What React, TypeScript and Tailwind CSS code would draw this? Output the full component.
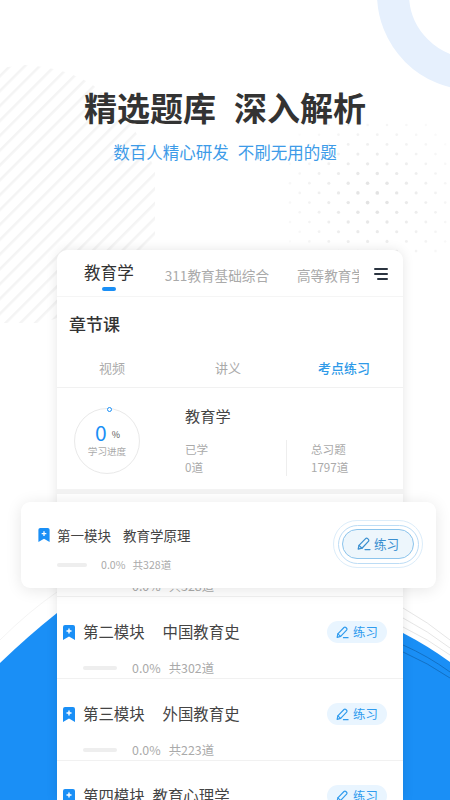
const FONT = "font-['Noto_Sans_CJK_SC','Noto_Sans',sans-serif]";

function Background() {
  const dots: { x: number; y: number; r: number; o: number }[] = [];
  for (let row = 0; row < 14; row++) {
    for (let col = 0; col < 18; col++) {
      const x = 290 + col * 9.7;
      const y = 125 + row * 9.7;
      const d = Math.hypot(x - 372, y - 198) / 100;
      if (d > 1 || (row + col) % 2 === 1) continue;
      dots.push({ x, y, r: 1.9 - d * 0.8, o: 0.6 * (1 - d) + 0.06 });
    }
  }
  return (
    <svg className="absolute inset-0" width="450" height="800" viewBox="0 0 450 800">
      <defs>
        <pattern id="st" width="10.5" height="10.5" patternUnits="userSpaceOnUse" patternTransform="rotate(-45)">
          <rect width="10.5" height="2.5" fill="#f4f4f4" />
        </pattern>
      </defs>
      <circle cx="473" cy="-6" r="80" fill="none" stroke="#e6f0fd" strokeWidth="32" />
      <path d="M0 68 L25 65 Q70 68 97 88 Q135 120 155 170 L155 245 Q100 310 40 323 L0 323Z" fill="url(#st)" />
      {dots.map((d, i) => (
        <circle key={i} cx={d.x} cy={d.y} r={d.r} fill="#d0d0d0" opacity={d.o} />
      ))}
      <path d="M0 663 Q28 636 57 613 L403 633 Q428 646 450 662 L450 800 L0 800Z" fill="#1a8ff6" />
      <path d="M403 608 Q428 622 450 640" fill="none" stroke="#e6e6e6" />
      <path d="M403 618 Q428 631 450 648" fill="none" stroke="#e6e6e6" />
      <path d="M403 627 Q428 639 450 655" fill="none" stroke="#e6e6e6" />
      <path d="M403 645 Q428 656 450 672" fill="none" stroke="#1068b8" strokeWidth="0.8" />
      <path d="M403 652 Q428 663 450 678" fill="none" stroke="#1068b8" strokeWidth="0.8" />
      <path d="M0 640 Q28 612 57 592" fill="none" stroke="#f4f4f4" />
    </svg>
  );
}

function Bookmark({ className }: { className: string }) {
  return (
    <svg className={className} viewBox="0 0 12 15">
      <path d="M2 0H10a2 2 0 0 1 2 2V15L6 11.6 0 15V2a2 2 0 0 1 2-2Z" fill="#1a8ff6" />
      <path d="M6 3.5v5M3.5 6h5" stroke="#fff" strokeWidth="1.4" />
    </svg>
  );
}

function Pen({ className }: { className: string }) {
  return (
    <svg className={className} viewBox="0 0 14 14" fill="none" stroke="currentColor" strokeWidth="1.25" strokeLinejoin="round" strokeLinecap="round">
      <path d="M1.2 12.2 2 8.4 8.6 1.6a1.4 1.4 0 0 1 2 0l.8.8a1.4 1.4 0 0 1 0 2L5 11.2Z" />
      <path d="M2 8.4 5 11.2M8 12.6H13" />
    </svg>
  );
}

function Row({ a, b, gap, n }: { a: string; b: string; gap: string; n: string }) {
  return (
    <div className="flex h-[82px] shrink-0 items-start justify-between border-b border-[#f1f1f1] pl-[6px] pr-[16px]">
      <div>
        <div className="mt-[23px] flex h-[24px] items-center">
          <Bookmark className="h-[15px] w-[12px]" />
          <span className={`ml-[8px] text-[15.4px] text-[#444] ${gap}`}>{a}</span>
          <span className="text-[15.4px] text-[#444]">{b}</span>
        </div>
        <div className="mt-[15px] flex h-[18px] items-center pl-[20px] text-[12.4px] text-[#aaa]">
          <span className="h-[4.5px] w-[34px] rounded-full bg-[#eeeeee]" />
          <span className="ml-[15px]">0.0%</span>
          <span className="ml-[8px]">共{n}道</span>
        </div>
      </div>
      <div className="mt-[24px] flex h-[22px] w-[60px] items-center justify-center gap-[4px] rounded-full bg-[#e9f5ff] text-[12.4px] text-[#2f9bee]">
        <Pen className="h-[13px] w-[13px]" />
        <span>练习</span>
      </div>
    </div>
  );
}

export default function App() {
  return (
    <div className={`relative h-[800px] w-[450px] overflow-hidden bg-white ${FONT}`}>
      <Background />
      <div className="relative flex h-full flex-col items-center">
        <h1 className="mt-[83px] flex h-[48px] items-center gap-[18px] text-[33px] font-bold leading-none text-[#333]">
          <span>精选题库</span>
          <span>深入解析</span>
        </h1>
        <p className="mt-[9px] flex h-[24px] items-center gap-[9px] text-[16.5px] leading-none text-[#3d9be8]">
          <span>数百人精心研发</span>
          <span>不刷无用的题</span>
        </p>

        <div className="ml-[10px] mt-[86px] flex w-[346px] flex-1 flex-col overflow-hidden rounded-t-[10px] bg-white shadow-[0_0_12px_rgba(0,0,0,0.1)]">
          <div className="relative flex h-[47px] shrink-0 items-start border-b border-[#f5f5f5]">
            <div className="relative ml-[27px] mt-[10px] text-[16.6px] leading-[24px] text-[#333]">
              教育学
              <span className="absolute left-[18px] top-[27px] h-[3.5px] w-[14px] rounded-full bg-[#1a8ff6]" />
            </div>
            <div className="ml-[31px] mt-[13px] text-[13.6px] leading-[24px] text-[#aaa]">311教育基础综合</div>
            <div className="ml-[28px] mt-[13px] w-[62px] overflow-hidden whitespace-nowrap text-[13.6px] leading-[24px] text-[#aaa]">高等教育学</div>
            <div className="ml-[15px] mt-[18px] flex w-[14px] flex-col items-end gap-[3px]">
              <span className="h-[2px] w-[14px] rounded-full bg-[#2b3440]" />
              <span className="h-[2px] w-[14px] rounded-full bg-[#2b3440]" />
              <span className="h-[2px] w-[11px] rounded-full bg-[#2b3440]" />
            </div>
          </div>

          <div className="ml-[12px] mt-[15px] h-[24px] text-[17px] font-medium leading-[24px] text-[#333]">章节课</div>

          <div className="mt-[22px] flex h-[30px] shrink-0 items-start border-b border-[#f1f1f1] text-[13px] leading-[20px]">
            <span className="ml-[42px] text-[#aaa]">视频</span>
            <span className="ml-[90px] text-[#aaa]">讲义</span>
            <span className="ml-[77px] font-medium text-[#2f9ae8]">考点练习</span>
          </div>

          <div className="flex h-[106px] shrink-0 border-b-[5px] border-[#f3f3f3]">
            <div className="relative ml-[17px] mt-[20px] h-[66px] w-[66px] rounded-full border border-[#e9e9e9]">
              <span className="absolute left-[32px] top-[-2px] h-[5px] w-[5px] rounded-full border-[1.5px] border-[#1a8ff6] bg-white" />
              <div className="mt-[10px] flex h-[26px] items-center pl-[20px]">
                <span className="text-[21px] leading-none text-[#1a8ff6]">0</span>
                <span className="ml-[5px] mt-[4px] text-[9px] leading-none text-[#555]">%</span>
              </div>
              <div className="text-center text-[9.6px] leading-[12px] text-[#aaa]">学习进度</div>
            </div>
            <div className="ml-[45px] mt-[15px] w-[175px]">
              <div className="text-[15.2px] leading-[24px] text-[#444]">教育学</div>
              <div className="mt-[13px] flex">
                <div className="w-[101px] text-[11.6px] leading-[18px] text-[#aaa]">
                  <div>已学</div>
                  <div>0道</div>
                </div>
                <div className="w-[1px] bg-[#eeeeee]" />
                <div className="ml-[24px] whitespace-nowrap text-[11.6px] leading-[18px] text-[#aaa]">
                  <div>总习题</div>
                  <div>1797道</div>
                </div>
              </div>
            </div>
          </div>

          <div className="mt-[21px] flex flex-col">
            <Row a="第一模块" b="教育学原理" gap="mr-[18px]" n="328" />
            <Row a="第二模块" b="中国教育史" gap="mr-[18px]" n="302" />
            <Row a="第三模块" b="外国教育史" gap="mr-[18px]" n="223" />
            <Row a="第四模块" b="教育心理学" gap="mr-[8px]" n="256" />
          </div>
        </div>
      </div>

      <div className="absolute left-[21px] top-[502px] flex h-[86px] w-[415px] items-start justify-between rounded-[9px] bg-white pl-[17px] pr-[13px] shadow-[0_2px_16px_rgba(0,0,0,0.1)]">
        <div>
          <div className="mt-[23px] flex h-[20px] items-center">
            <Bookmark className="h-[14px] w-[12px]" />
            <span className="ml-[7px] mr-[12px] text-[13.5px] text-[#444]">第一模块</span>
            <span className="text-[13.5px] text-[#444]">教育学原理</span>
          </div>
          <div className="mt-[12px] flex h-[16px] items-center pl-[19px] text-[10.6px] text-[#aaa]">
            <span className="h-[4px] w-[30px] rounded-full bg-[#eeeeee]" />
            <span className="ml-[14px]">0.0%</span>
            <span className="ml-[7px]">共328道</span>
          </div>
        </div>
        <div className="mt-[18px] rounded-full border border-[#dcedfa] p-[3.5px]">
          <div className="rounded-full border border-[#bcdcf5] p-[3.5px]">
            <div className="flex h-[30px] w-[72px] items-center justify-center gap-[3px] rounded-full border border-[#8cc4ec] bg-[#edf6fc] text-[12.6px] text-[#3a8fd0]">
              <Pen className="h-[14px] w-[14px]" />
              <span>练习</span>
            </div>
          </div>
        </div>
      </div>
    </div>
  );
}
